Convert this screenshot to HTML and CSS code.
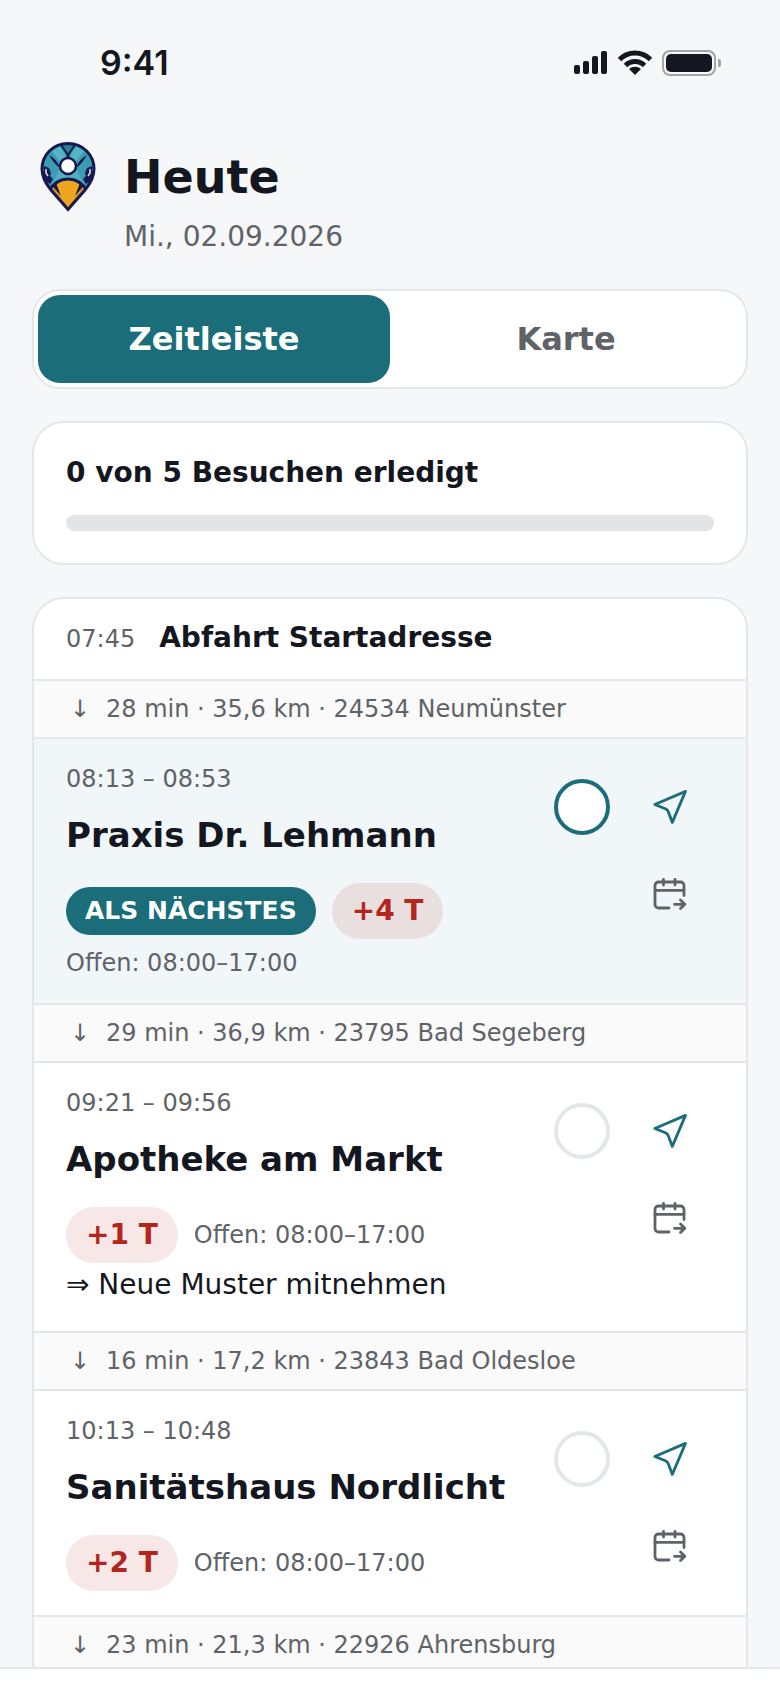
FILE: index.html
```html
<!DOCTYPE html>
<html lang="de">
<head>
    <meta charset="UTF-8">
    <meta name="viewport" content="width=device-width, initial-scale=1.0">
    <title>Heute</title>
    <link rel="stylesheet" href="styles.css">
</head>
<body>

    <!-- Shared icons -->
    <svg class="sprite" aria-hidden="true">
        <symbol id="icon-navigate" viewBox="0 0 36 36">
            <path d="M2.8 15.5 L33.5 2.4 L20.3 33.4 L16.4 23 Q15.6 20.8 13.4 19.8 Z" fill="none" stroke="currentColor" stroke-width="2.8" stroke-linejoin="round"/>
        </symbol>
        <symbol id="icon-move" viewBox="0 0 36 36">
            <g fill="none" stroke="currentColor" stroke-width="2.8" stroke-linecap="round" stroke-linejoin="round">
                <path d="M17 31 H6.500 a3.500 3.500 0 0 1 -3.500 -3.500 V8.500 a3.500 3.500 0 0 1 3.500 -3.500 H28.500 a3.500 3.500 0 0 1 3.500 3.500 V18.500"/>
                <path d="M3 13.300 H32 M11.500 2.500 V8 M23 2.500 V8"/>
                <path d="M22.500 27.300 H32.500 M28.500 23 L32.800 27.300 L28.500 31.600"/>
            </g>
        </symbol>
    </svg>

    <!-- Status Bar -->
    <div class="status-bar">
        <span class="clock">9:41</span>
        <div class="status-icons">
            <svg width="34" height="24" viewBox="0 0 34 24" fill="currentColor" aria-hidden="true">
                <rect x="0" y="14" width="6" height="9" rx="2"/>
                <rect x="9" y="10" width="6" height="13" rx="2"/>
                <rect x="18" y="5" width="6" height="18" rx="2"/>
                <rect x="27" y="0" width="6" height="23" rx="2"/>
            </svg>
            <svg width="34" height="26" viewBox="1 0 34 26" aria-hidden="true">
                <g fill="none" stroke="currentColor" stroke-width="5">
                    <path d="M2.500 9.500 A22 22 0 0 1 33.500 9.500"/>
                    <path d="M8.500 15.500 A13.500 13.500 0 0 1 27.500 15.500"/>
                </g>
                <path d="M12 19 A9 9 0 0 1 24 19 L18 25 Z" fill="currentColor"/>
            </svg>
            <svg width="60" height="26" viewBox="0 0 60 26" aria-hidden="true">
                <rect x="1" y="1" width="52" height="24" rx="7" fill="none" stroke="#a3a5a9" stroke-width="2"/>
                <rect x="4" y="4" width="46" height="18" rx="5" fill="currentColor"/>
                <path d="M56 9 h1 a2 2 0 0 1 2 2 v4 a2 2 0 0 1 -2 2 h-1 Z" fill="#a3a5a9"/>
            </svg>
        </div>
    </div>

    <main class="page">

        <!-- Header -->
        <header class="header">
            <svg class="logo" viewBox="0 0 56 70" aria-hidden="true">
                <defs>
                    <clipPath id="pin">
                        <path d="M28 1.500 C13 1.500 2 13 2 27 C2 35 6 42 11 48 L28 67.500 L45 48 C50 42 54 35 54 27 C54 13 43 1.500 28 1.500 Z"/>
                    </clipPath>
                </defs>
                <g clip-path="url(#pin)">
                    <rect width="56" height="70" fill="#3a9bb1"/>
                    <!-- Feathers -->
                    <path d="M21 2 H35 L28 14 Z" fill="#2a7e97"/>
                    <path d="M12 9 L20 4 L27 16 L20 20 Z M44 9 L36 4 L29 16 L36 20 Z" fill="#55b4c6"/>
                    <path d="M19 28 L28 34 L37 28 L44 42 L40 40 Q28 34 16 40 L12 42 Z" fill="#4fb0c3"/>
                    <path d="M9 13 Q17 17 20 26 Q14 22 9 13 Z M47 13 Q39 17 36 26 Q42 22 47 13 Z" fill="#17184f"/>
                    <path d="M21 3 L28 13 L35 3" fill="none" stroke="#17184f" stroke-width="2"/>
                    <path d="M26.500 11 h3 v5 h-3 Z" fill="#17184f"/>
                    <path d="M4 24 L9 26 L11 31 L10 34 L13 37 L10 42 L4 38 Z M52 24 L47 26 L45 31 L46 34 L43 37 L46 42 L52 38 Z" fill="#17184f"/>
                    <path d="M6 27 L6 31 L8 34 M50 27 L50 31 L48 34" fill="none" stroke="#d8e6ee" stroke-width="1.500"/>
                    <!-- Beak -->
                    <path d="M9 49 Q16 37 28 37 Q40 37 47 49 L28 71 Z" fill="#efa61c" stroke="#17184f" stroke-width="3"/>
                    <path d="M12 47 L14 47 L26 62 L28 68 Z M44 47 L42 47 L30 62 L28 68 Z" fill="#cf8a3c"/>
                    <path d="M13 42 L16 41 L21 54 L14 46 Z M43 42 L40 41 L35 54 L42 46 Z" fill="#17184f"/>
                </g>
                <circle cx="28" cy="24" r="8" fill="#ffffff" stroke="#17184f" stroke-width="2.500"/>
                <path d="M28 1.500 C13 1.500 2 13 2 27 C2 35 6 42 11 48 L28 67.500 L45 48 C50 42 54 35 54 27 C54 13 43 1.500 28 1.500 Z" fill="none" stroke="#17184f" stroke-width="3"/>
            </svg>
            <div>
                <h1>Heute</h1>
                <p class="date">Mi., 02.09.2026</p>
            </div>
        </header>

        <!-- View Switch -->
        <div class="switch">
            <button type="button" class="active" aria-pressed="true">Zeitleiste</button>
            <button type="button" aria-pressed="false">Karte</button>
        </div>

        <!-- Progress -->
        <section class="card progress">
            <h2 id="progress-label">0 von 5 Besuchen erledigt</h2>
            <div class="bar" role="progressbar" aria-labelledby="progress-label" aria-valuenow="0" aria-valuemin="0" aria-valuemax="5"></div>
        </section>

        <!-- Timeline -->
        <section class="card timeline">
            <div class="start">
                <span class="time">07:45</span>
                <strong>Abfahrt Startadresse</strong>
            </div>

            <div class="leg"><span class="arrow">↓</span>28 min · 35,6 km · 24534 Neumünster</div>

            <article class="visit next">
                <div class="info">
                    <p class="time">08:13 – 08:53</p>
                    <h3>Praxis Dr. Lehmann</h3>
                    <div class="tags">
                        <span class="badge">ALS NÄCHSTES</span>
                        <span class="overdue">+4 T</span>
                        <span class="hours">Offen: 08:00–17:00</span>
                    </div>
                </div>
                <div class="actions">
                    <label class="action"><input type="checkbox" class="check" aria-label="Praxis Dr. Lehmann erledigt"></label>
                    <a class="action navigate" href="#" aria-label="Navigation starten"><svg><use href="#icon-navigate"/></svg></a>
                    <button type="button" class="action move" aria-label="Verschieben"><svg><use href="#icon-move"/></svg></button>
                </div>
            </article>

            <div class="leg"><span class="arrow">↓</span>29 min · 36,9 km · 23795 Bad Segeberg</div>

            <article class="visit">
                <div class="info">
                    <p class="time">09:21 – 09:56</p>
                    <h3>Apotheke am Markt</h3>
                    <div class="tags">
                        <span class="overdue">+1 T</span>
                        <span class="hours">Offen: 08:00–17:00</span>
                    </div>
                    <p class="note">⇒ Neue Muster mitnehmen</p>
                </div>
                <div class="actions">
                    <label class="action"><input type="checkbox" class="check" aria-label="Apotheke am Markt erledigt"></label>
                    <a class="action navigate" href="#" aria-label="Navigation starten"><svg><use href="#icon-navigate"/></svg></a>
                    <button type="button" class="action move" aria-label="Verschieben"><svg><use href="#icon-move"/></svg></button>
                </div>
            </article>

            <div class="leg"><span class="arrow">↓</span>16 min · 17,2 km · 23843 Bad Oldesloe</div>

            <article class="visit">
                <div class="info">
                    <p class="time">10:13 – 10:48</p>
                    <h3>Sanitätshaus Nordlicht</h3>
                    <div class="tags">
                        <span class="overdue">+2 T</span>
                        <span class="hours">Offen: 08:00–17:00</span>
                    </div>
                </div>
                <div class="actions">
                    <label class="action"><input type="checkbox" class="check" aria-label="Sanitätshaus Nordlicht erledigt"></label>
                    <a class="action navigate" href="#" aria-label="Navigation starten"><svg><use href="#icon-navigate"/></svg></a>
                    <button type="button" class="action move" aria-label="Verschieben"><svg><use href="#icon-move"/></svg></button>
                </div>
            </article>

            <div class="leg"><span class="arrow">↓</span>23 min · 21,3 km · 22926 Ahrensburg</div>
        </section>
    </main>

    <div class="bottom-bar"></div>

</body>
</html>
```

FILE: styles.css
```css
/* General Styles */
* {
    box-sizing: border-box;
}

body {
    margin: 0;
    height: 100vh;
    display: flex;
    flex-direction: column;
    font-family: "DejaVu Sans", sans-serif;
    font-size: 28px;
    line-height: 36px;
    background-color: #f5f7f9;
    color: #14171f;
}

h1, h2, h3, p {
    margin: 0;
}

button {
    font-family: inherit;
    border: none;
    background: none;
    padding: 0;
    cursor: pointer;
}

.sprite {
    position: absolute;
    width: 0;
    height: 0;
}

/* Status Bar */
.status-bar {
    flex: none;
    display: flex;
    justify-content: space-between;
    align-items: center;
    height: 125px;
    padding: 0 58px 0 100px;
}

.clock {
    font-family: Inter, sans-serif;
    font-size: 34px;
    font-weight: 600;
}

.status-icons {
    display: flex;
    align-items: center;
    gap: 10px;
}

/* Page */
.page {
    flex: 1;
    min-height: 0;
    overflow: hidden;
    padding: 16px 32px 0;
}

.card {
    background: white;
    border: 2px solid #e4e7e9;
    border-radius: 32px;
    margin-bottom: 32px;
}

/* Header */
.header {
    display: flex;
    gap: 28px;
    padding: 0 8px;
    margin-bottom: 32px;
}

.logo {
    flex: none;
    width: 56px;
    height: 70px;
    margin-top: 1px;
}

h1 {
    font-size: 46px;
    line-height: 72px;
    margin-bottom: 4px;
}

.date {
    line-height: 40px;
    color: #5f6368;
}

/* View Switch */
.switch {
    display: flex;
    background: white;
    border: 2px solid #e4e7e9;
    border-radius: 28px;
    padding: 4px;
    margin-bottom: 32px;
}

.switch button {
    flex: 1;
    height: 88px;
    border-radius: 22px;
    font-size: 32px;
    font-weight: bold;
    color: #5f6368;
}

.switch .active {
    background: #1b6e79;
    color: white;
}

/* Progress */
.progress {
    padding: 32px;
}

.progress h2 {
    font-size: 28px;
    line-height: 36px;
    margin-bottom: 24px;
}

.bar {
    height: 16px;
    border-radius: 8px;
    background: #e1e5e7;
}

/* Timeline */
.timeline {
    overflow: hidden;
    padding-bottom: 32px;
}

.start {
    display: flex;
    align-items: baseline;
    gap: 24px;
    padding: 21px 32px 23px;
    border-bottom: 2px solid #e4e7e9;
}

.time,
.hours,
.leg {
    font-size: 24px;
    line-height: 32px;
    color: #5f6368;
}

.leg {
    display: flex;
    gap: 12px;
    padding: 12px 32px;
    background: #fafafb;
    border-bottom: 2px solid #e4e7e9;
}

.arrow {
    width: 28px;
    text-align: center;
}

/* Visits */
.visit {
    display: flex;
    padding: 24px 32px;
    border-bottom: 2px solid #e4e7e9;
}

.visit.next {
    background: #f1f7f8;
}

.info {
    flex: 1;
}

.visit h3 {
    font-size: 34px;
    line-height: 48px;
    margin: 16px 0 24px;
}

.tags {
    display: flex;
    flex-wrap: wrap;
    align-items: center;
    gap: 8px 16px;
}

.badge {
    padding: 0 19px;
    border-radius: 24px;
    background: #1b6e79;
    color: white;
    font-size: 25px;
    font-weight: bold;
    line-height: 48px;
}

.overdue {
    padding: 0 20px;
    border-radius: 28px;
    background: rgba(179, 38, 30, 0.11);
    color: #b3261e;
    font-weight: bold;
    line-height: 56px;
}

.note {
    line-height: 44px;
}

/* Visit Actions */
.actions {
    flex: none;
    display: grid;
    grid-template-columns: 88px 88px;
    grid-auto-rows: 88px;
    align-content: start;
}

.action {
    display: flex;
    align-items: center;
    justify-content: center;
}

.action svg {
    width: 36px;
    height: 36px;
}

.navigate {
    color: #1b6e79;
}

.move {
    grid-column: 2;
    color: #5f6368;
}

.check {
    appearance: none;
    width: 56px;
    height: 56px;
    margin: 0;
    border: 4px solid #e4e7e9;
    border-radius: 50%;
    background: white;
}

.next .check {
    border-color: #1b6e79;
}

/* Bottom Bar */
.bottom-bar {
    flex: none;
    height: 21px;
    background: white;
    border-top: 2px solid #e4e7e9;
}
```
